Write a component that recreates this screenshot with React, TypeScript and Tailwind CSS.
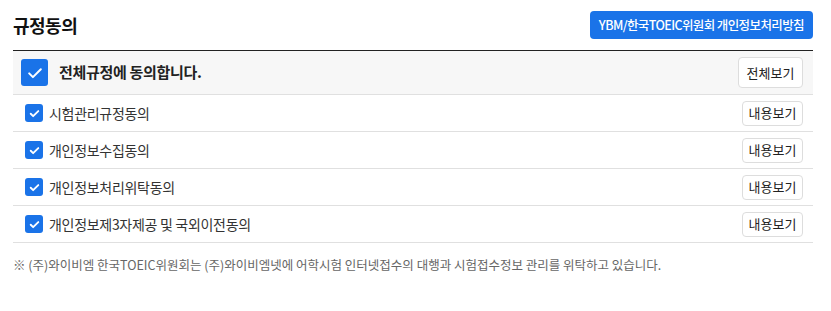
const items = ['시험관리규정동의', '개인정보수집동의', '개인정보처리위탁동의', '개인정보제3자제공 및 국외이전동의'];

function Check({ big }: { big?: boolean }) {
  return (
    <span
      className={
        big
          ? 'flex h-[27px] w-[27px] flex-none items-center justify-center rounded-[3px] bg-[#1a73e8]'
          : 'flex h-[18px] w-[18px] flex-none items-center justify-center rounded-[3px] bg-[#1a73e8]'
      }
    >
      <svg viewBox="0 0 24 24" className={big ? 'h-[20px] w-[20px]' : 'h-[13px] w-[13px]'} fill="none">
        <path d="M5 12.5l4.5 4.5L19 7.5" stroke="white" strokeWidth={big ? 2.4 : 3.4} strokeLinecap="round" strokeLinejoin="round" />
      </svg>
    </span>
  );
}

export default function App() {
  return (
    <div className="h-[311px] w-[831px] bg-white font-['Noto_Sans_CJK_KR',sans-serif] text-[#222]">
      <div className="ml-[13px] w-[800px] pt-[11px]">
        <div className="flex h-[28px] items-center justify-between">
          <h2 className="text-[18px] font-bold leading-none tracking-[-0.5px] text-[#111]">규정동의</h2>
          <button className="h-[28px] rounded-[4px] bg-[#1a73e8] px-[9px] text-[12.5px] font-medium tracking-[-0.6px] text-white">
            YBM/한국TOEIC위원회 개인정보처리방침
          </button>
        </div>
        <div className="mt-[11px] border-t border-[#222]">
          <div className="flex h-[44px] items-center justify-between border-b border-[#e0e0e0] bg-[#f7f7f7] pl-[8px] pr-[10px]">
            <div className="flex items-center gap-[11px]">
              <Check big />
              <span className="text-[15px] font-bold tracking-[-0.3px] text-[#222]">전체규정에 동의합니다.</span>
            </div>
            <button className="h-[31px] w-[65px] rounded-[4px] border border-[#ddd] bg-white text-[13px] text-[#222]">전체보기</button>
          </div>
          {items.map((t) => (
            <div key={t} className="flex h-[37px] items-center justify-between border-b border-[#e0e0e0] pl-[12px] pr-[10px]">
              <div className="flex items-center gap-[6px]">
                <Check />
                <span className="text-[14px] tracking-[-0.3px] text-[#333]">{t}</span>
              </div>
              <button className="h-[25px] w-[61px] rounded-[4px] border border-[#ddd] bg-white text-[13px] text-[#222]">내용보기</button>
            </div>
          ))}
        </div>
        <p className="mt-[13px] text-[12.5px] text-[#666]">
          ※ (주)와이비엠 한국TOEIC위원회는 (주)와이비엠넷에 어학시험 인터넷접수의 대행과 시험접수정보 관리를 위탁하고 있습니다.
        </p>
      </div>
    </div>
  );
}
